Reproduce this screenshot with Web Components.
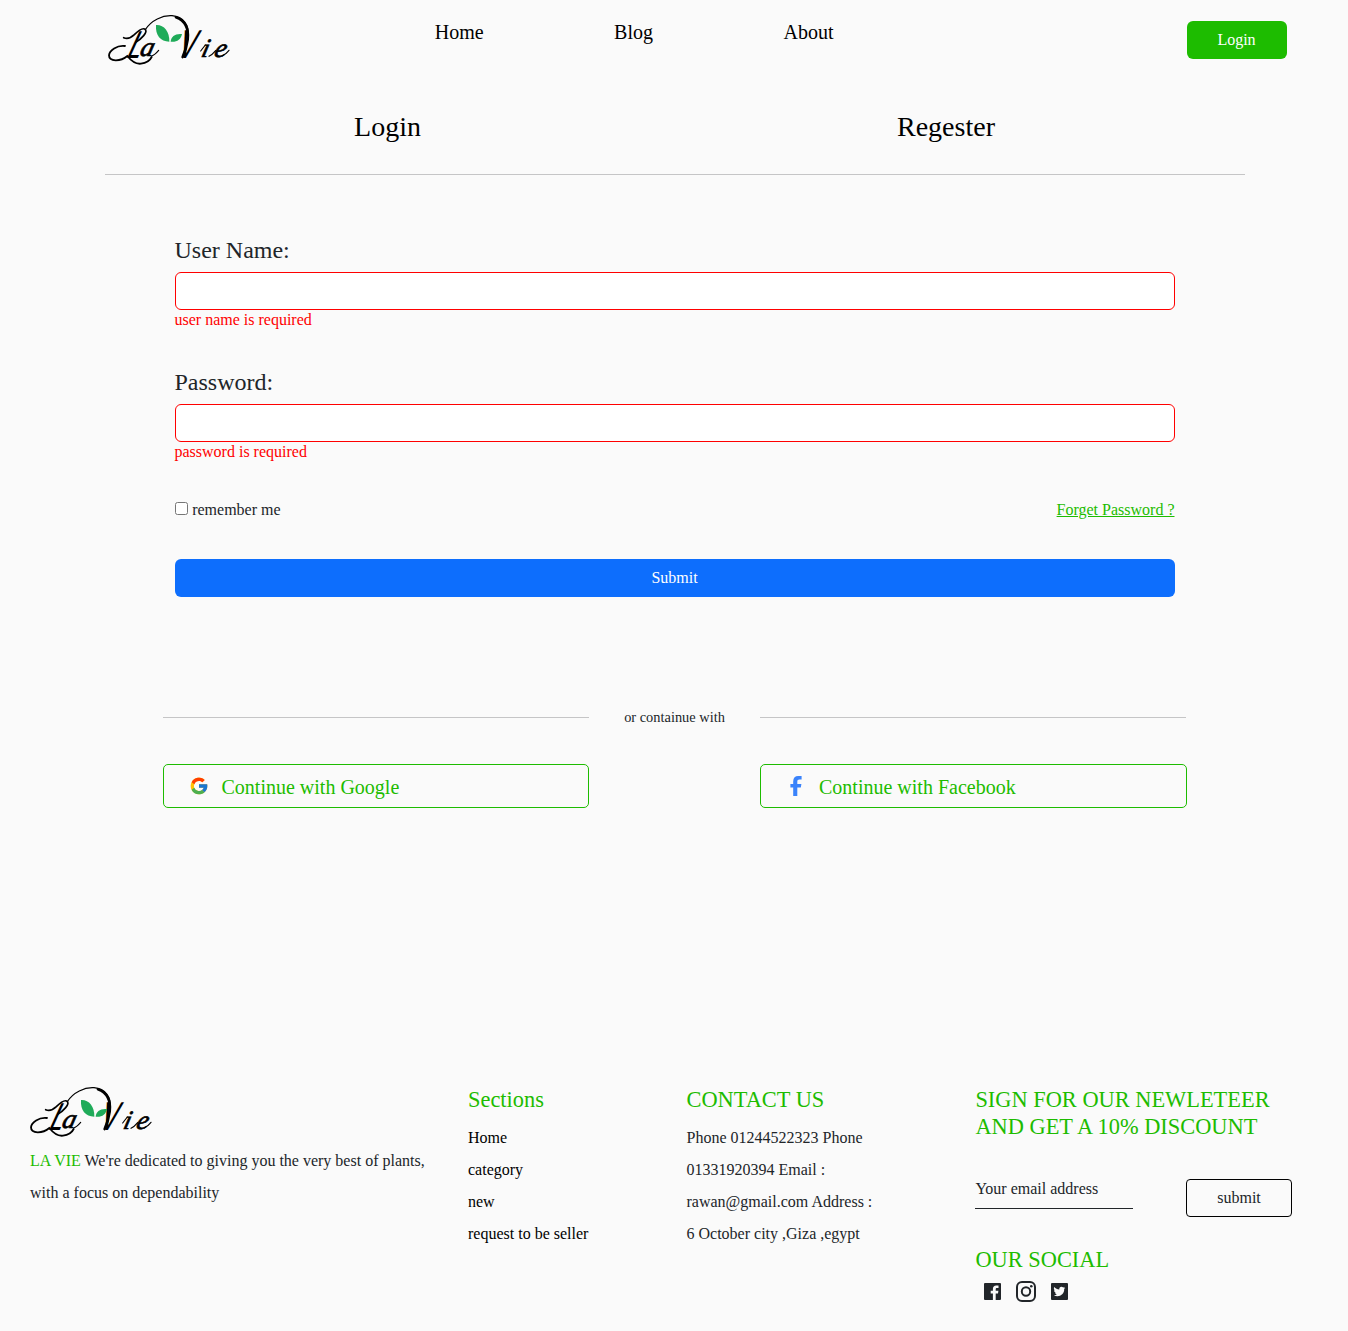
<!DOCTYPE html>
<html lang="en">
<head>
<meta charset="utf-8">
<title>La Vie</title>
<style>
body{margin:0;background:#fafafa;color:#212529;font:16px/24px "Liberation Serif","Times New Roman",serif;width:1348px;height:1331px;overflow:hidden}
</style>
</head>
<body>
<lv-page></lv-page>
<script>
function define(name, html){
  const t=document.createElement('template');
  t.innerHTML='<style>*{box-sizing:border-box}:host{display:block}</style>'+html;
  customElements.define(name,class extends HTMLElement{
    constructor(){
      super();
      this.attachShadow({mode:'open'}).append(t.content.cloneNode(true));
    }
  });
}

define('lv-logo',`<style>:host{width:140px;height:70px;flex:none}svg{display:block}:host([low]) .leaf{transform:translate(9px,9px)}</style>
<svg width="140" height="70" viewBox="0 0 420 210">
  <g font-style="italic" fill="#000">
    <text transform="translate(77 158) skewX(-20)" font-family="Lato, sans-serif" font-size="112" textLength="40" lengthAdjust="spacingAndGlyphs">L</text>
    <g stroke="#000" stroke-width="2">
    <text transform="translate(117 153) skewX(-14)" font-family="Liberation Serif, serif" font-size="82">a</text>
    <text transform="translate(301 155) skewX(-14)" font-family="Liberation Serif, serif" font-size="80">i</text>
    <text transform="translate(340 155) skewX(-14)" font-family="Liberation Serif, serif" font-size="80">e</text>
    </g>
    <text transform="translate(231 160) skewX(-13)" font-family="Lato, sans-serif" font-size="116" textLength="52" lengthAdjust="spacingAndGlyphs">V</text>
  </g>
  <g fill="none" stroke="#000" stroke-linecap="round">
    <path d="M71 98Q86 105 103 89Q124 68 134 72Q143 78 131 92Q119 106 107 112" stroke-width="5"/>
    <path d="M136 74C153 46 188 30 216 32C251 35 267 60 265 93" stroke-width="3.500"/>
    <path d="M228 37C255 47 267 70 263 104C260 127 254 143 248 156" stroke-width="8"/>
    <path d="M75 123C51 120 28 136 27 151C27 171 62 170 82 153C94 168 108 178 123 176C139 174 151 164 155 156" stroke-width="5.500"/>
    <path d="M155 153Q164 150 176 136M327 154Q337 149 347 137M366 153Q377 149 387 136M302 138L316 120" stroke-width="3.500"/>
  </g>
  <g class="leaf" fill="#1fab59"><path d="M168 60C190 58 209 78 208 110C181 110 166 91 168 60Z"/>
  <path d="M212 110C213 94 226 85 246 87C243 104 230 112 212 110Z"/></g>
</svg>`);

define('lv-button',`<style>
:host{height:38px;flex:none}
button{display:block;width:100%;height:100%;border:0;border-radius:6px;padding:0 1px 0 0;margin:0;background:var(--bg,#1dbc00);color:#fff;font:16px/24px "Liberation Serif",serif}
:host([outline]) button{background:none;border:1px solid #000;color:#212529;border-radius:4px;padding:0}
</style><button><slot></slot></button>`);

define('lv-nav',`<style>
:host{height:80px}
header{display:flex;height:80px;padding:5px 61px 0 100px;align-items:flex-start}
nav{display:flex;gap:130.500px;margin:12px auto 0 194.700px;font-size:20px;line-height:30px;color:#000}
lv-button{width:100px;margin-top:16px}
</style><header><lv-logo></lv-logo><nav><span>Home</span><span>Blog</span><span>About</span></nav><lv-button>Login</lv-button></header>`);

define('lv-tabs',`<style>
:host{width:1140px;margin-left:105px;padding-top:30px;height:95px;border-bottom:1px solid #c5c5c6}
div{display:flex;padding-right:23px;font-size:28px;line-height:34px;color:#000;text-align:center}
span{flex:1}span:first-child{padding-left:6.500px}span:last-child{padding-left:6.500px}
</style><div><span>Login</span><span>Regester</span></div>`);

define('lv-field',`<style>
:host{height:132px}
label{display:block;font-size:24px;line-height:36px;margin:0 0 4px -.5px}
input{display:block;width:100%;height:38px;border:1px solid #f00;border-radius:6px;background:#fff;padding:6px 12px;outline:0}
p{margin:0 0 0 -.5px;color:#f00;line-height:20px}
</style><label><slot></slot></label><input><p><slot name="error"></slot></p>`);

define('lv-form',`<style>
:host{margin:57px 173px 0 175px}
.row{display:flex;justify-content:space-between;height:24px;margin-top:2px}
label{display:flex}
input{width:13px;height:13px;margin:4px 4.2px 0 0}
a{color:#1dbc00;text-decoration:underline;margin-right:.5px}
lv-button{--bg:#0d6efd;margin-top:37px}
</style>
<lv-field>User Name:<span slot="error">user name is required</span></lv-field>
<lv-field>Password:<span slot="error">password is required</span></lv-field>
<div class="row"><label><input type="checkbox">remember me</label><a>Forget Password ?</a></div>
<lv-button>Submit</lv-button>`);

define('lv-divider',`<style>
:host{margin:108px 162px 0 163px}
div{display:flex;align-items:center;height:24px;font-size:14.4px}
i{width:426px;height:1px;background:#c5c5c6}
span{flex:1;text-align:center}
</style><div><i></i><span><slot></slot></span><i></i></div>`);

define('lv-social-button',`<style>
:host{width:427px;height:44px;border:1px solid #1dbc00;border-radius:5px;color:#1dbc00;font-size:20px}
div{display:flex;align-items:center;height:42px;padding:2px 0 0 var(--pad,25px);gap:var(--gap,12.500px)}
::slotted(svg){flex:none;margin-top:-2px}
</style><div><slot name="icon"></slot><span><slot></slot></span></div>`);

define('lv-social-row',`<style>
div{display:flex;justify-content:space-between;margin:35px 161px 0 163px}
</style><div>
<lv-social-button style="width:426px"><svg slot="icon" width="20" height="20" viewBox="0 0 48 48"><path fill="#ffc107" d="M43.6 20H24v8h11.3A12 12 0 1 1 24 12c3.1 0 5.800 1.200 8 3l5.700-5.700A20 20 0 1 0 44 24c0-1.300-.1-2.700-.4-4Z"/><path fill="#ff3d00" d="m6.300 14.700 6.600 4.800A12 12 0 0 1 24 12c3.100 0 5.800 1.200 8 3l5.700-5.700A20 20 0 0 0 6.300 14.700Z"/><path fill="#4caf50" d="M24 44c5.200 0 9.900-2 13.400-5.200l-6.200-5.200A12 12 0 0 1 12.700 28l-6.500 5A20 20 0 0 0 24 44Z"/><path fill="#1976d2" d="M43.600 20H24v8h11.300a12 12 0 0 1-4.100 5.600l6.200 5.200C37 39.200 44 34 44 24c0-1.300-.1-2.700-.4-4Z"/></svg>Continue with Google</lv-social-button>
<lv-social-button style="--pad:29px;--gap:17px"><svg slot="icon" width="12" height="20" viewBox="0 0 12 20"><path fill="#3a83fb" d="M3.200 20V11.500H.4V8h2.800V5.300C3.200 1.900 5.200.1 8.200.1h3.400v3.400H9.500C7.900 3.500 7.300 4.400 7.300 5.600V8h4.100l-.6 3.500H7.300V20Z"/></svg>Continue with Facebook</lv-social-button>
</div>`);

define('lv-column',`<style>
:host{flex:none}
h3{margin:0;font-size:22.4px;line-height:27px;font-weight:400;color:#1dbc00;white-space:pre-line}
div{margin-top:9px;line-height:32px}
</style><h3><slot name="title"></slot></h3><div><slot></slot></div>`);

define('lv-socials',`<style>
:host{padding:8px 0 0 9px}div{display:flex;align-items:center;gap:15px;height:21px}svg{display:block}
</style><div>
<svg width="17" height="17" viewBox="0 0 17 17"><path fill="#212529" fill-rule="evenodd" d="M1 0H16Q17 0 17 1V16Q17 17 16 17H11.700V10.500H14L14.400 7.800H11.700V6.200C11.700 5.300 12.100 4.900 13 4.900H14.500V2.600H12.300C10.100 2.600 8.900 3.900 8.900 6V7.800H6.700V10.500H8.900V17H1Q0 17 0 16V1Q0 0 1 0Z"/></svg>
<svg width="20" height="21" viewBox="0 0 20 21"><g fill="none" stroke="#212529" stroke-width="2"><rect x="1" y="1" width="18" height="19" rx="5"/><circle cx="10" cy="10.500" r="4.200"/></g><circle cx="15.300" cy="5.200" r="1.300" fill="#212529"/></svg>
<svg width="17" height="17" viewBox="0 0 17 17"><rect width="17" height="17" rx="1" fill="#212529"/><path fill="#fafafa" d="M3.200 4C4.600 5.500 6.300 6.400 8.300 6.500C7.800 3.800 10.700 2.800 12.200 4.400L13.800 3.900L13 5.200L14.300 4.900L13.200 6.100C13.400 10.800 9.900 13.200 6.600 13.200C5.200 13.200 3.900 12.800 2.800 12.200C4 12.300 5.200 11.900 6 11.300C5 11.200 4.200 10.600 3.900 9.700H4.900C3.700 9.400 3 8.500 3 7.300L4 7.600C2.900 6.700 2.600 5.300 3.200 4Z"/></svg></div>`);

define('lv-footer',`<style>
:host{margin-top:269px}
footer{display:flex;align-items:flex-start}
.brand{width:468px;flex:none}
.brand lv-logo{margin:0 0 -2px 22px}
.brand p{margin:0 0 0 30px;width:400px;line-height:32px}
b{font-weight:400;color:#1dbc00}
lv-column{margin-top:9px}
.sections{width:218.500px;color:#000}
.contact{width:288.900px}
.news{width:316.600px}
.contact p{margin:0;width:190px}
ul{list-style:none;margin:0;padding:0}
.mail{display:flex;justify-content:space-between;align-items:flex-start;padding-top:30px}
.mail span{width:158px;height:30px;line-height:20px;border-bottom:1px solid #212529}
.mail lv-button{width:106px}
.title{font-size:22.400px;line-height:27px;color:#1dbc00;margin-top:29px}
</style><footer>
<div class="brand"><lv-logo low></lv-logo><p><b>LA VIE</b> We're dedicated to giving you the very best of plants, with a focus on dependability</p></div>
<lv-column class="sections"><span slot="title">Sections</span><ul><li>Home</li><li>category</li><li>new</li><li>request to be seller</li></ul></lv-column>
<lv-column class="contact"><span slot="title">CONTACT US</span><p>Phone 01244522323 Phone 01331920394 Email : rawan@gmail.com Address : 6 October city ,Giza ,egypt</p></lv-column>
<lv-column class="news"><span slot="title">SIGN FOR OUR NEWLETEER<br>AND GET A 10% DISCOUNT</span><div class="mail"><span>Your email address</span><lv-button outline>submit</lv-button></div><div class="title">OUR SOCIAL</div><lv-socials></lv-socials></lv-column>
</footer>`);

define('lv-page',`<lv-nav></lv-nav><lv-tabs></lv-tabs><lv-form></lv-form><lv-divider>or containue with</lv-divider><lv-social-row></lv-social-row><lv-footer></lv-footer>`);
</script>
</body>
</html>
